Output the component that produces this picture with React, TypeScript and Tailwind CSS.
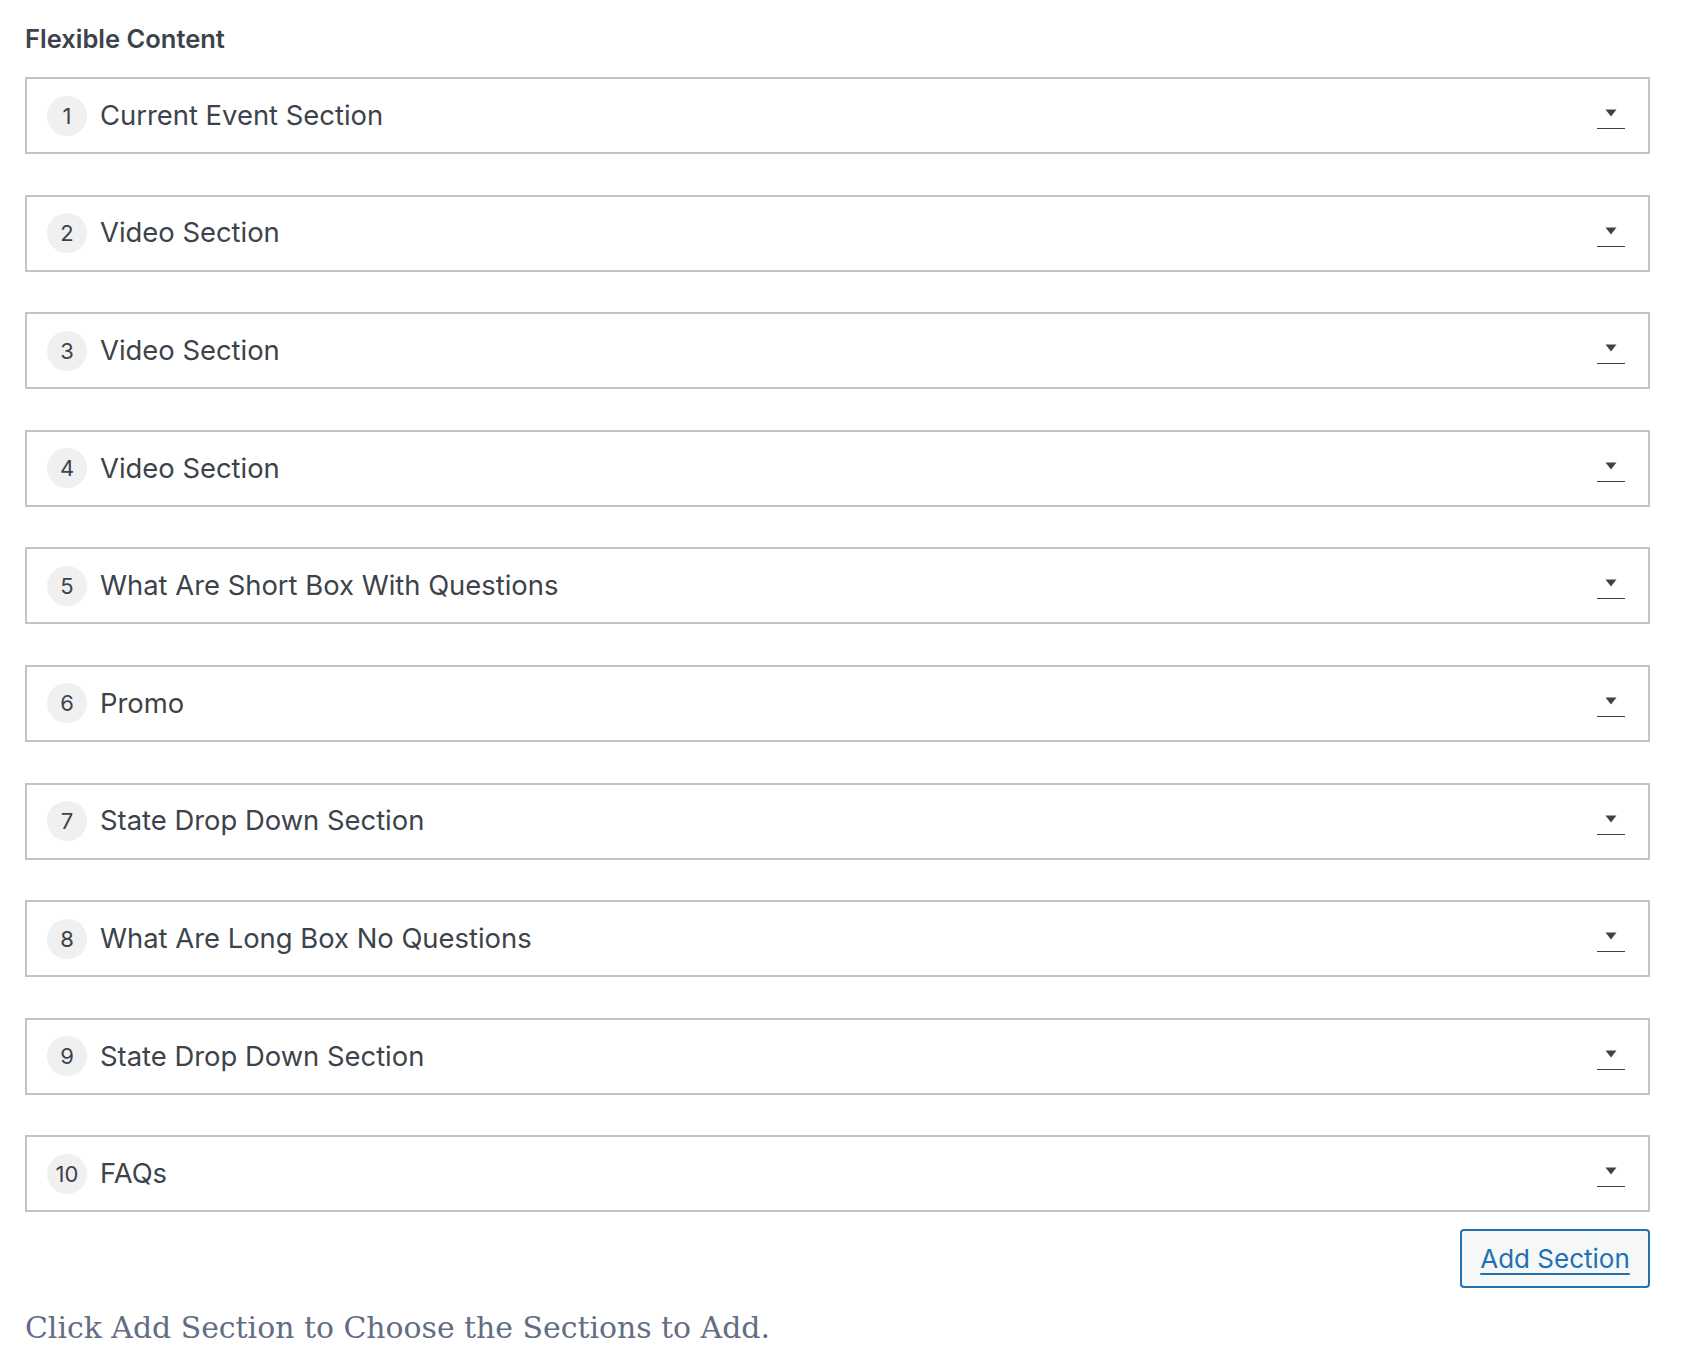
import React from "react"

const sections = [
  "Current Event Section",
  "Video Section",
  "Video Section",
  "Video Section",
  "What Are Short Box With Questions",
  "Promo",
  "State Drop Down Section",
  "What Are Long Box No Questions",
  "State Drop Down Section",
  "FAQs",
]

function Toggle() {
  return (
    <span className="mt-[7px] flex h-[20px] w-[28px] justify-center border-b border-[#3c434a]">
      <svg width="12" height="8" viewBox="0 0 12 8" className="block">
        <path d="M0.5 0.5 L11.5 0.5 L6 7.5 Z" fill="#3c434a" />
      </svg>
    </span>
  )
}

export default function App() {
  return (
    <main
      className="min-h-screen bg-white pl-[25px] pr-[36px] pt-[24px] text-[#3c434a]"
      style={{ fontFamily: "Inter, 'Noto Sans', sans-serif" }}
    >
      <h2 className="mb-[23px] text-[25.5px] font-semibold leading-[30px]">Flexible Content</h2>

      <div className="flex flex-col gap-[40.6px]">
        {sections.map((title, i) => (
          <div
            key={i}
            className="flex h-[77px] items-center border-2 border-[#c3c4c7] bg-white pl-[20px] pr-[23px]"
          >
            <span className="flex h-10 w-10 shrink-0 items-center justify-center rounded-full bg-[#f0f0f0] text-[22px] leading-none">
              {i + 1}
            </span>
            <span className="ml-[13px] flex-1 text-[27.4px] leading-none">{title}</span>
            <Toggle />
          </div>
        ))}
      </div>

      <div className="mt-[17px] flex justify-end">
        <button className="flex h-[59px] w-[190px] items-center justify-center rounded-[4px] border-2 border-[#2271b1] bg-[#f6f7f7] text-[26px] text-[#2271b1] underline decoration-[1.5px] underline-offset-[5px]">
          Add Section
        </button>
      </div>

      <p
        className="mt-[22px] text-[29.9px] leading-[36px] text-[#626d83]"
        style={{ fontFamily: "'DejaVu Serif', serif" }}
      >
        Click Add Section to Choose the Sections to Add.
      </p>
    </main>
  )
}
